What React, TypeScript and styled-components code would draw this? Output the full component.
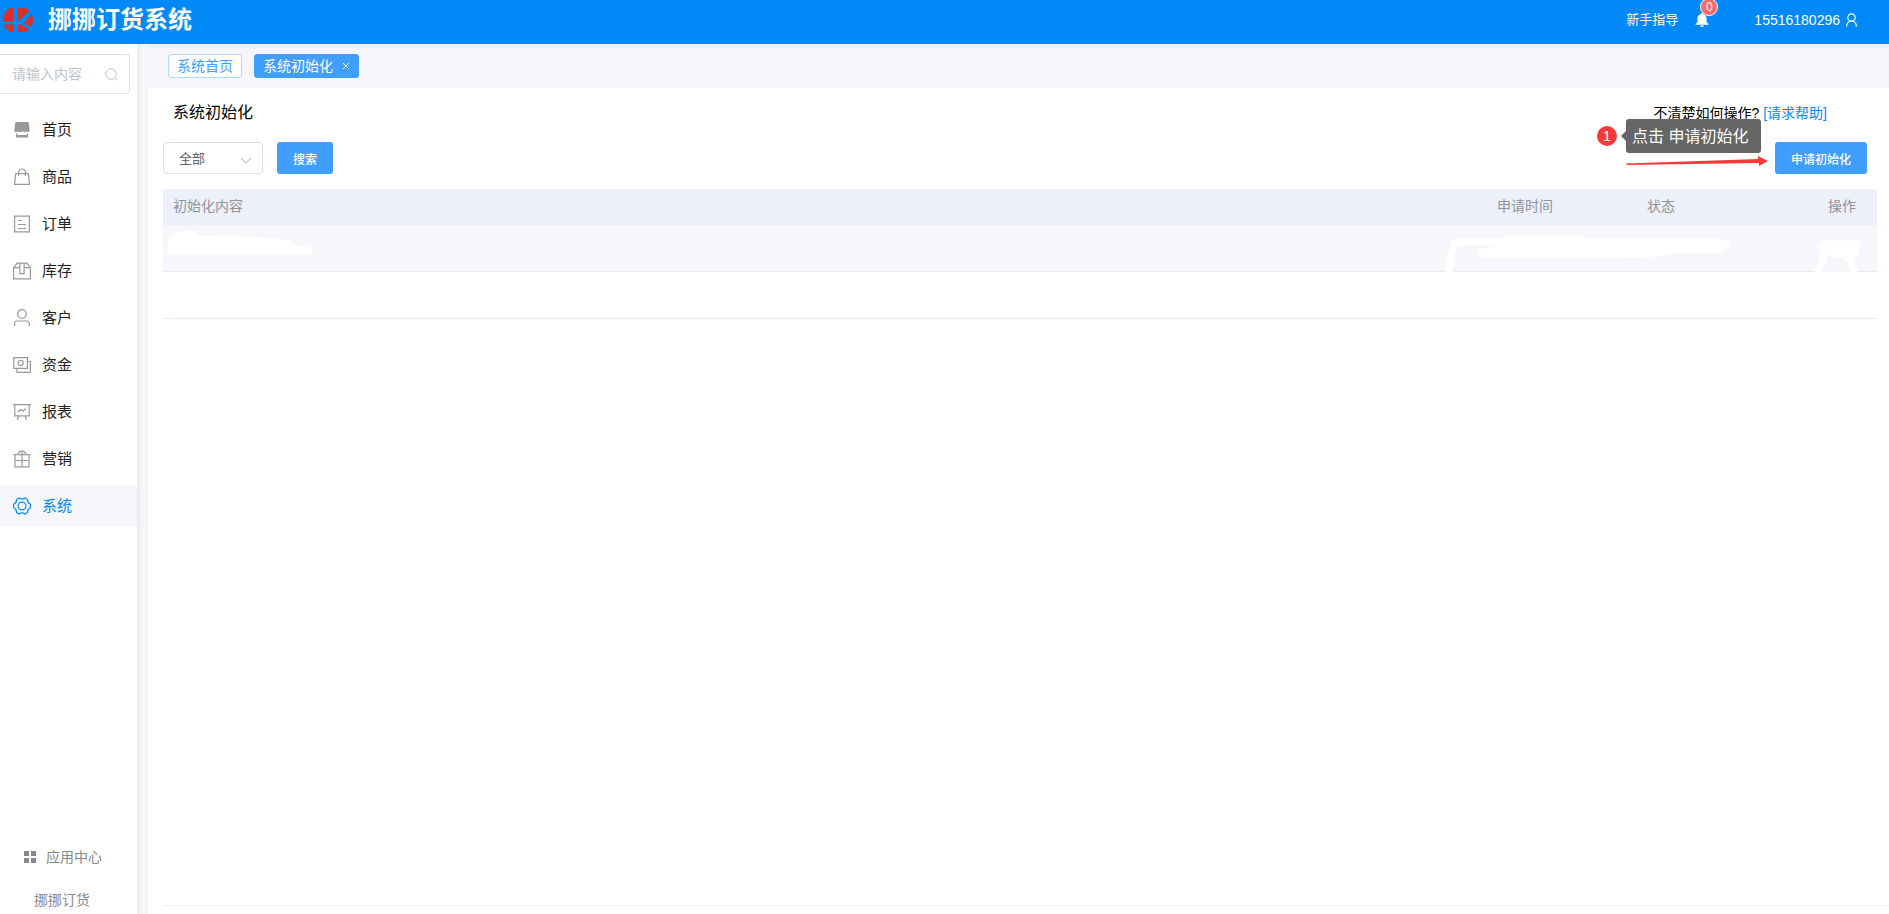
import React from "react";
import styled, { createGlobalStyle, css } from "styled-components";

const Global = createGlobalStyle`
  *, *::before, *::after { box-sizing: border-box; }
  body {
    margin: 0;
    font-family: "Liberation Sans", "Noto Sans CJK SC", sans-serif;
    font-size: 14px;
    color: #000;
    background: #f5f5fa;
  }
  button, input, select { font-family: inherit; }
  a { text-decoration: none; }
`;

const Page = styled.div`
  min-height: 100vh;
  display: flex;
  flex-direction: column;
`;

const TopBar = styled.header`
  height: 44px;
  display: flex;
  align-items: center;
  justify-content: space-between;
  padding: 0 32px 5px 3px;
  background: #0189f7;
  color: #fff;
`;

const Brand = styled.div`
  display: flex;
  align-items: center;
  gap: 15px;
`;

const BrandName = styled.h1`
  margin: 0;
  font-size: 24px;
  line-height: 32px;
  font-weight: 700;
`;

const TopLinks = styled.nav`
  display: flex;
  align-items: center;
`;

const GuideLink = styled.a`
  font-size: 13px;
  line-height: 20px;
  color: #fff;
  margin-right: 17px;
`;

const BellButton = styled.button`
  position: relative;
  display: flex;
  border: 0;
  padding: 0;
  margin-right: 45px;
  background: none;
  color: #fff;
`;

const Badge = styled.span`
  position: absolute;
  left: 5px;
  top: -15px;
  min-width: 18px;
  height: 18px;
  border: 1px solid #fff;
  border-radius: 9px;
  background: #f56c6c;
  font-size: 12px;
  line-height: 16px;
  text-align: center;
`;

const Account = styled.a`
  display: flex;
  align-items: center;
  gap: 6px;
  font-size: 14px;
  line-height: 20px;
  color: #fff;
`;

const Body = styled.div`
  flex: 1;
  display: flex;
`;

const Sidebar = styled.aside`
  flex: none;
  width: 137px;
  display: flex;
  flex-direction: column;
  padding-top: 10px;
  background: #fff;
  box-shadow: 2px 0 4px rgba(0, 0, 0, 0.06);
`;

const SearchBox = styled.label`
  height: 40px;
  margin-right: 7px;
  display: flex;
  align-items: center;
  padding: 0 11px 0 12px;
  border: 1px solid #dcdfe6;
  border-left: 0;
  border-radius: 0 4px 4px 0;
  color: #c0c4cc;
`;

const SearchInput = styled.input`
  flex: 1;
  min-width: 0;
  border: 0;
  padding: 0;
  outline: 0;
  background: none;
  font-size: 14px;
  &::placeholder { color: #c0c4cc; opacity: 1; }
`;

const Menu = styled.ul`
  list-style: none;
  margin: 15px 0 0;
  padding: 0;
  display: flex;
  flex-direction: column;
  gap: 5px;
`;

const MenuLink = styled.a<{ $active?: boolean }>`
  height: 42px;
  display: flex;
  align-items: center;
  gap: 11px;
  padding-left: 13px;
  font-size: 15px;
  line-height: 20px;
  color: #222;
  svg { color: #999; }
  ${(p) => p.$active && css`
    background: #f5f7fa;
    color: #0189f7;
    svg { color: #0189f7; }
  `}
`;

const SideFooter = styled.div`
  margin-top: auto;
  padding-bottom: 4px;
  display: flex;
  flex-direction: column;
  gap: 23px;
`;

const FooterLink = styled.a<{ $indent: number }>`
  display: flex;
  align-items: center;
  gap: 10px;
  padding-left: ${(p) => p.$indent}px;
  font-size: 14px;
  line-height: 20px;
  color: #888;
`;

const Content = styled.div`
  flex: 1;
  min-width: 0;
  margin-left: 11px;
  display: flex;
  flex-direction: column;
`;

const Tabs = styled.nav`
  height: 44px;
  display: flex;
  align-items: center;
  gap: 12px;
  padding: 0 20px;
  box-shadow: inset 0 3px 4px -2px rgba(0, 0, 0, 0.05);
`;

const Tab = styled.a<{ $active?: boolean }>`
  height: 24px;
  display: flex;
  align-items: center;
  gap: 9px;
  padding: 0 8px;
  border: 1px solid ${(p) => (p.$active ? "#409eff" : "#b3d8ff")};
  border-radius: 3px;
  background: ${(p) => (p.$active ? "#409eff" : "#fff")};
  color: ${(p) => (p.$active ? "#fff" : "#409eff")};
  font-size: 14px;
  line-height: 20px;
`;

const CloseTab = styled.button`
  display: flex;
  border: 0;
  padding: 0;
  background: none;
  color: #fff;
`;

const Panel = styled.main`
  position: relative;
  flex: 1;
  display: flex;
  flex-direction: column;
  padding: 13px 0 8px 15px;
  background: #fff;
`;

const PanelHead = styled.div`
  display: flex;
  align-items: center;
  justify-content: space-between;
  padding: 0 62px 0 10px;
  line-height: 24px;
`;

const Title = styled.h2`
  margin: 0;
  font-size: 16px;
  font-weight: 400;
`;

const Help = styled.p`
  margin: 0;
  font-size: 14px;
  a { color: #0189f7; }
`;

const Toolbar = styled.div`
  display: flex;
  align-items: center;
  gap: 14px;
  margin: 17px 22px 15px 0;
`;

const SelectWrap = styled.label`
  position: relative;
  width: 100px;
  height: 32px;
  color: #c0c4cc;
  svg { position: absolute; right: 11px; top: 15px; pointer-events: none; }
`;

const Select = styled.select`
  appearance: none;
  width: 100%;
  height: 100%;
  padding: 0 15px;
  border: 1px solid #dcdfe6;
  border-radius: 4px;
  background: #fff;
  color: #606266;
  font-size: 13px;
`;

const Button = styled.button`
  height: 32px;
  padding: 0 16px;
  border: 0;
  border-radius: 3px;
  background: #409eff;
  color: #fff;
  font-size: 12px;
  font-weight: 500;
`;

const ApplyButton = styled(Button)`
  margin-left: auto;
`;

const TableWrap = styled.div`
  position: relative;
  margin-right: 12px;
`;

const Table = styled.table`
  width: 100%;
  table-layout: fixed;
  border-collapse: separate;
  border-spacing: 0;
  font-size: 14px;
`;

const Th = styled.th<{ $width?: number; $right?: boolean }>`
  width: ${(p) => (p.$width ? `${p.$width}px` : "auto")};
  height: 36px;
  padding: 0 ${(p) => (p.$right ? 21 : 10)}px 2px 10px;
  border-bottom: 1px solid #ebeef5;
  background: #edf0fa;
  color: #909399;
  font-weight: 400;
  line-height: 20px;
  text-align: ${(p) => (p.$right ? "right" : "left")};
`;

const Row = styled.tr<{ $hover?: boolean }>`
  background: ${(p) => (p.$hover ? "#f5f7fa" : "#fff")};
`;

const Td = styled.td`
  height: 47px;
  padding: 0 10px;
  border-bottom: 1px solid #e8eaf2;
`;

const Smudge = styled.svg<{ $side: "left" | "right" }>`
  position: absolute;
  top: 36px;
  ${(p) => p.$side}: 0;
  pointer-events: none;
  fill: #fff;
  stroke: #fff;
  stroke-linecap: round;
  stroke-linejoin: round;
`;

const PagerRule = styled.hr`
  width: 100%;
  margin: auto 0 0;
  border: 0;
  border-top: 1px solid #eee;
`;

const Guide = styled.div`
  position: absolute;
  top: 31px;
  right: 122px;
  width: 170px;
  color: #fff;
  pointer-events: none;
`;

const GuideRow = styled.div`
  display: flex;
  align-items: center;
`;

const StepDot = styled.span`
  width: 20px;
  height: 20px;
  margin-right: 4px;
  border-radius: 50%;
  background: #fa3a3a;
  font-size: 14px;
  line-height: 20px;
  text-align: center;
`;

const Pointer = styled.span`
  border: 5px solid transparent;
  border-left: 0;
  border-right-color: #666;
`;

const Tip = styled.span`
  width: 135px;
  height: 34px;
  padding-left: 6px;
  border-radius: 3px;
  background: #666;
  font-size: 16px;
  line-height: 35px;
  white-space: nowrap;
`;

const ArrowLine = styled.svg`
  display: block;
  margin: 3px 0 0 29px;
`;

const Line = ({ children }: { children: React.ReactNode }) => (
  <svg width="18" height="18" viewBox="0 0 18 18" fill="none" stroke="currentColor" strokeWidth="1.2">
    {children}
  </svg>
);

const menu: { label: string; icon: React.ReactNode; active?: boolean }[] = [
  {
    label: "首页",
    icon: (
      <Line>
        <path d="M2.500 1h13l1.300 8.500c-.6 2-2.700 2-3.600.7-1 1.300-2.600 1.300-3.400.1-.5.700-1.100.7-1.600 0-.8 1.200-2.400 1.200-3.400-.1-.9 1.300-3 1.300-3.600-.7z" fill="currentColor" stroke="none" />
        <path d="M3.600 12.600v3.300h10.800v-3.300" />
        <path d="M4 14h10v2H4z" fill="currentColor" stroke="none" />
      </Line>
    ),
  },
  {
    label: "商品",
    icon: <Line><path d="M2.700 5.600h12.600l1.100 10.800H1.600zM5.600 8V4.600a3.400 3.600 0 0 1 6.800 0V8" /></Line>,
  },
  {
    label: "订单",
    icon: <Line><path d="M1.600 1.100h14.800v15.800H1.600zM5 5.500h3.500M5 9.500h8M5 13.500h8" /></Line>,
  },
  {
    label: "库存",
    icon: <Line><path d="M.6 5.600 4.200 1.100h9.600l3.600 4.500v11.300H.6zM.6 5.600h5.800M11.600 5.600h5.800M6.900 1.500v10.100h4.200V1.500" /></Line>,
  },
  {
    label: "客户",
    icon: <Line><circle cx="9" cy="5" r="4.300" /><path d="M1.600 17v-1.600c0-2 1.300-3.400 3.300-3.400h8.200c2 0 3.300 1.400 3.300 3.400V17" /></Line>,
  },
  {
    label: "资金",
    icon: <Line><path d="M.8 1.600h13.600v10.800H.8zM14.400 5.500h3v10.800H4v-3.800" /><circle cx="7.600" cy="7" r="2.600" /></Line>,
  },
  {
    label: "报表",
    icon: <Line><path d="M0 1.600h18M1.800 1.600v11.200h14.400V1.600M5 9l2.700-2.500L10 8.300l3-2.800M6 12.800l-1.700 4M12 12.800l1.700 4" /></Line>,
  },
  {
    label: "营销",
    icon: <Line><path d="M.5 4.600h17M2 4.600v12.200h14V4.600M2 10.500h14M9 4.600v12.200M5.500 4.600V3l1.800-1.800h3.400L12.500 3v1.600M9 1.200v3.400" /></Line>,
  },
  {
    label: "系统",
    active: true,
    icon: (
      <Line>
        <path d="M6.200 1c1.700 1.400 3.900 1.400 5.600 0l2.700 1.600c-.1 2.200.9 3.900 2.900 4.700v3.400c-2 .8-3 2.500-2.900 4.700L11.800 17c-1.700-1.400-3.900-1.400-5.600 0l-2.700-1.600c.1-2.200-.9-3.900-2.900-4.700V7.300c2-.8 3-2.500 2.900-4.700z" />
        <circle cx="9" cy="9" r="3.900" />
      </Line>
    ),
  },
];

const Logo = () => (
  <svg width="30" height="24" viewBox="0 0 30 24">
    <path d="M7 0H23C27 2.500 30 7 30 12s-3 9.500-7 12H7C3 21.500 0 17 0 12S3 2.500 7 0z" fill="#d9302c" />
    <path d="M10.500 0h4v24h-4zM0 14h15v2.500H0zM14.500 14 27 2.500l2 3.500-8 9 8 5-2 2.500-8.500-6h-4z" fill="#0189f7" />
  </svg>
);

export default function App() {
  return (
    <Page>
      <Global />
      <TopBar>
        <Brand>
          <Logo />
          <BrandName>挪挪订货系统</BrandName>
        </Brand>
        <TopLinks>
          <GuideLink href="#guide">新手指导</GuideLink>
          <BellButton aria-label="消息">
            <svg width="14" height="14" viewBox="0 0 14 14" fill="currentColor">
              <path d="M7 0a1 1 0 0 1 1 1c2.500.5 3.600 2.500 3.600 4.700v3.500L13.500 11v.7H.5V11l1.900-1.800V5.700C2.400 3.500 3.500 1.500 6 1a1 1 0 0 1 1-1zM5 12.500h4c-.3 2-3.700 2-4 0z" />
            </svg>
            <Badge>0</Badge>
          </BellButton>
          <Account href="#account">
            15516180296
            <svg width="11" height="14" viewBox="0 0 11 14" fill="none" stroke="currentColor" strokeWidth="1.200">
              <circle cx="5.500" cy="4.500" r="3.700" />
              <path d="M.6 13.500c0-3 1.900-5.300 4.900-5.300s4.900 2.300 4.900 5.300" />
            </svg>
          </Account>
        </TopLinks>
      </TopBar>
      <Body>
        <Sidebar>
          <SearchBox>
            <SearchInput placeholder="请输入内容" aria-label="搜索菜单" />
            <svg width="13" height="13" viewBox="0 0 13 13" fill="none" stroke="currentColor">
              <circle cx="6" cy="6" r="5.300" />
              <path d="m10 10 2.500 2.500" />
            </svg>
          </SearchBox>
          <Menu>
            {menu.map((m) => (
              <li key={m.label}>
                <MenuLink href="#" $active={m.active}>
                  {m.icon}
                  {m.label}
                </MenuLink>
              </li>
            ))}
          </Menu>
          <SideFooter>
            <FooterLink href="#apps" $indent={24}>
              <svg width="12" height="12" viewBox="0 0 12 12" fill="currentColor">
                <path d="M0 0h5v5H0zM7 0h5v5H7zM0 7h5v5H0zM7 7h5v5H7z" />
              </svg>
              应用中心
            </FooterLink>
            <FooterLink href="#brand" $indent={34}>挪挪订货</FooterLink>
          </SideFooter>
        </Sidebar>
        <Content>
          <Tabs>
            <Tab href="#home">系统首页</Tab>
            <Tab as="div" $active>
              系统初始化
              <CloseTab aria-label="关闭">
                <svg width="8" height="8" viewBox="0 0 8 8" stroke="currentColor">
                  <path d="m1 1 6 6M7 1 1 7" />
                </svg>
              </CloseTab>
            </Tab>
          </Tabs>
          <Panel>
            <PanelHead>
              <Title>系统初始化</Title>
              <Help>
                不清楚如何操作? <a href="#help">[请求帮助]</a>
              </Help>
            </PanelHead>
            <Toolbar>
              <SelectWrap>
                <Select aria-label="初始化内容">
                  <option>全部</option>
                </Select>
                <svg width="12" height="8" viewBox="0 0 12 8" fill="none" stroke="currentColor" strokeWidth="1.200">
                  <path d="m1 1 5 5 5-5" />
                </svg>
              </SelectWrap>
              <Button>搜索</Button>
              <ApplyButton>申请初始化</ApplyButton>
            </Toolbar>
            <TableWrap>
              <Table>
                <thead>
                  <tr>
                    <Th>初始化内容</Th>
                    <Th $width={150}>申请时间</Th>
                    <Th $width={120}>状态</Th>
                    <Th $width={120} $right>操作</Th>
                  </tr>
                </thead>
                <tbody>
                  <Row $hover><Td /><Td /><Td /><Td /></Row>
                  <Row><Td /><Td /><Td /><Td /></Row>
                </tbody>
              </Table>
              <Smudge $side="left" width="170" height="47" viewBox="0 0 170 47">
                <path d="M8 16 14 11 30 9V14l70 2 26 3v4l20 3H8z" strokeWidth="7" />
              </Smudge>
              <Smudge $side="right" width="450" height="47" viewBox="0 0 450 47">
                <path d="M29 17h54M28 17C25 27 22 37 22 47" strokeWidth="7" fill="none" />
                <path d="M56 28h3l14-4V19l10-4h72v3h138l5 2-8 4h-50l-6 3-50 1z" strokeWidth="9" />
                <path d="M395 21 399 19H430l-3 10-9 3-22-8z" strokeWidth="7" />
                <path d="M398 27l-7 21M422 29l5 19" strokeWidth="7" />
                <path d="M403 33h15l5 14h-26z" fill="#f5f7fa" stroke="none" />
              </Smudge>
            </TableWrap>
            <PagerRule />
            <Guide>
              <GuideRow>
                <StepDot>1</StepDot>
                <Pointer />
                <Tip>点击 申请初始化</Tip>
              </GuideRow>
              <ArrowLine width="142" height="11" viewBox="0 0 142 11" fill="#fa3a3a">
                <path d="M0 7.500 132 3V0l10 5-9 5V7L1 9z" />
              </ArrowLine>
            </Guide>
          </Panel>
        </Content>
      </Body>
    </Page>
  );
}
